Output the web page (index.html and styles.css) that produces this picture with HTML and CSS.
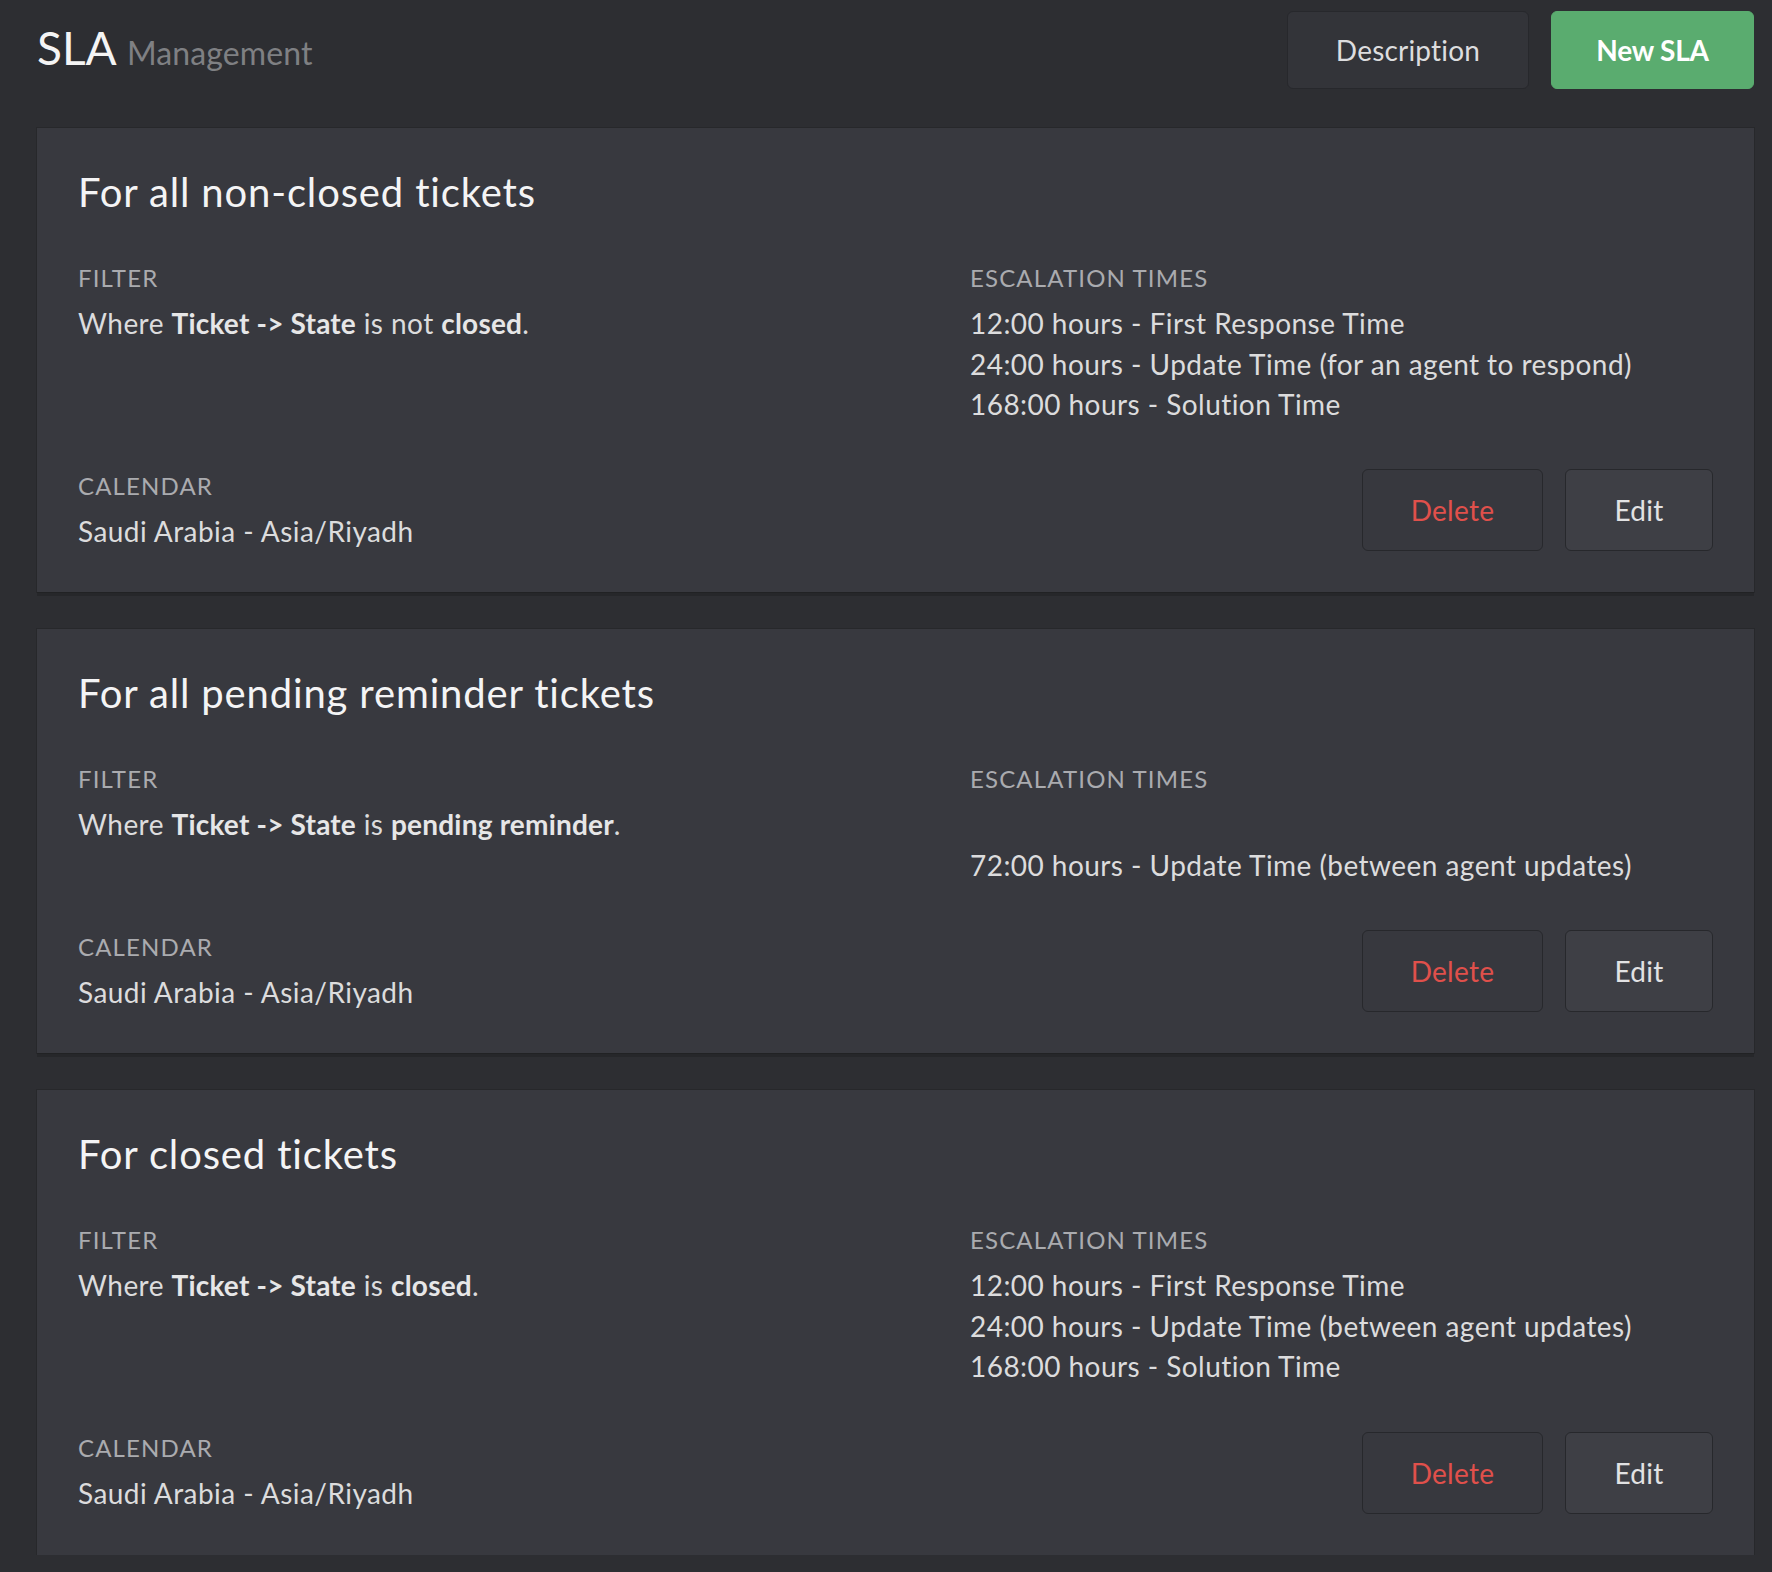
FILE: index.html
```html
<!DOCTYPE html>
<html lang="en">
<head>
<meta charset="utf-8">
<title>SLA Management</title>
<link rel="stylesheet" href="styles.css">
</head>
<body>
<div class="page">
  <header class="topbar">
    <h1 class="page-title">SLA <small>Management</small></h1>
    <div class="actions">
      <button class="btn btn-desc">Description</button>
      <button class="btn btn-primary">New SLA</button>
    </div>
  </header>

  <div class="list">
    <section class="card">
      <h2 class="card-title">For all non-closed tickets</h2>
      <div class="grid">
        <div class="cell">
          <div class="label">Filter</div>
          <div class="text">Where <b>Ticket -&gt; State</b> is not <b>closed</b>.</div>
        </div>
        <div class="cell">
          <div class="label">Escalation Times</div>
          <div class="text">
            <div class="line">12:00 hours - First Response Time</div>
            <div class="line">24:00 hours - Update Time (for an agent to respond)</div>
            <div class="line">168:00 hours - Solution Time</div>
          </div>
        </div>
        <div class="cell">
          <div class="label">Calendar</div>
          <div class="text">Saudi Arabia - Asia/Riyadh</div>
        </div>
        <div class="cell buttons">
          <button class="btn btn-delete">Delete</button>
          <button class="btn btn-edit">Edit</button>
        </div>
      </div>
    </section>

    <section class="card">
      <h2 class="card-title">For all pending reminder tickets</h2>
      <div class="grid">
        <div class="cell">
          <div class="label">Filter</div>
          <div class="text">Where <b>Ticket -&gt; State</b> is <b>pending reminder</b>.</div>
        </div>
        <div class="cell">
          <div class="label">Escalation Times</div>
          <div class="text">
            <div class="line empty"></div>
            <div class="line">72:00 hours - Update Time (between agent updates)</div>
          </div>
        </div>
        <div class="cell">
          <div class="label">Calendar</div>
          <div class="text">Saudi Arabia - Asia/Riyadh</div>
        </div>
        <div class="cell buttons">
          <button class="btn btn-delete">Delete</button>
          <button class="btn btn-edit">Edit</button>
        </div>
      </div>
    </section>

    <section class="card">
      <h2 class="card-title">For closed tickets</h2>
      <div class="grid">
        <div class="cell">
          <div class="label">Filter</div>
          <div class="text">Where <b>Ticket -&gt; State</b> is <b>closed</b>.</div>
        </div>
        <div class="cell">
          <div class="label">Escalation Times</div>
          <div class="text">
            <div class="line">12:00 hours - First Response Time</div>
            <div class="line">24:00 hours - Update Time (between agent updates)</div>
            <div class="line">168:00 hours - Solution Time</div>
          </div>
        </div>
        <div class="cell">
          <div class="label">Calendar</div>
          <div class="text">Saudi Arabia - Asia/Riyadh</div>
        </div>
        <div class="cell buttons">
          <button class="btn btn-delete">Delete</button>
          <button class="btn btn-edit">Edit</button>
        </div>
      </div>
    </section>
  </div>
</div>
</body>
</html>
```

FILE: styles.css
```css
* { box-sizing: border-box; }

html, body {
  margin: 0;
  background: #2d2e32;
}

body {
  font-family: Lato, "Noto Sans", "DejaVu Sans", sans-serif;
  color: #dcdcdd;
  font-size: 28px;
  line-height: 1.45;
}

.page {
  padding: 11px 18px 0 37px;
}

.topbar {
  display: flex;
  align-items: center;
  justify-content: space-between;
  height: 78px;
  margin-bottom: 39px;
}

.page-title {
  margin: 0;
  font-size: 46px;
  line-height: 78px;
  font-weight: 400;
  color: #f4f4f4;
}

.page-title small {
  font-size: 32px;
  color: #7f8083;
  letter-spacing: 0.1px;
}

.actions {
  display: flex;
  gap: 22px;
}

.btn {
  font-family: inherit;
  font-size: 28px;
  height: 78px;
  border-radius: 6px;
  border: 1px solid #27282c;
  cursor: pointer;
  line-height: 1;
}

.btn-desc {
  width: 242px;
  background: #333439;
  color: #dddddf;
  letter-spacing: 0.2px;
}

.btn-primary {
  width: 203px;
  background: #5aac6f;
  border-color: #5aac6f;
  color: #ffffff;
  font-weight: 700;
  letter-spacing: -0.2px;
}

.list {
  display: flex;
  flex-direction: column;
  gap: 37px;
}

.card {
  background: #38393f;
  padding: 40px 41px 41px 41px;
  box-shadow: 0 0 0 1px rgba(0, 0, 0, 0.12), 0 4px 0 rgba(0, 0, 0, 0.14);
}

.card-title {
  margin: 0 0 44px;
  font-size: 40px;
  line-height: 48px;
  font-weight: 400;
  letter-spacing: 0.85px;
  color: #f4f4f5;
}

.grid {
  display: grid;
  grid-template-columns: 892px 1fr;
  row-gap: 43px;
}

.label {
  font-size: 24px;
  line-height: 35px;
  text-transform: uppercase;
  letter-spacing: 1.15px;
  color: #aaabaf;
  margin-bottom: 8px;
}

.text {
  letter-spacing: 0.45px;
}

.text b {
  font-weight: 700;
  letter-spacing: 0.2px;
  color: #e6e6e7;
}

.line.empty {
  height: 40.6px;
}

.buttons {
  display: flex;
  justify-content: flex-end;
  align-items: flex-end;
  gap: 22px;
}

.buttons .btn {
  height: 82px;
  letter-spacing: 0.3px;
}

.btn-delete {
  width: 181px;
  background: #37383e;
  color: #e0504b;
}

.btn-edit {
  width: 148px;
  background: #3e3f45;
  color: #e2e2e3;
}
```
